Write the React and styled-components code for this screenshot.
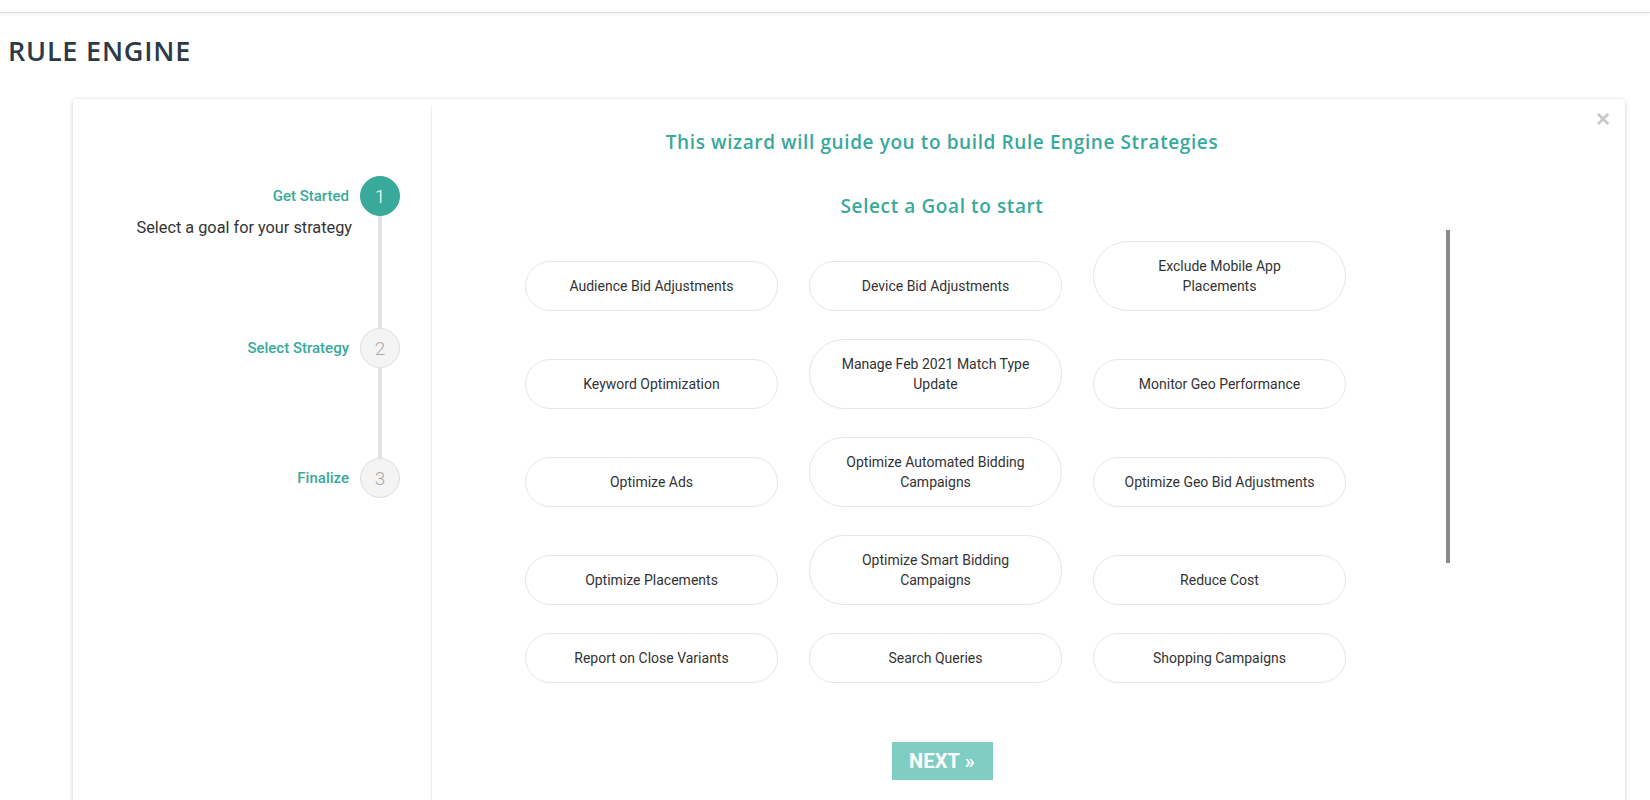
import React from "react";
import styled, { createGlobalStyle } from "styled-components";

const TEAL = "#38a99b";

const GlobalStyle = createGlobalStyle`
  html, body {
    margin: 0;
    padding: 0;
    background: #ffffff;
    overflow: hidden;
    font-family: Roboto, "Liberation Sans", Arial, sans-serif;
  }
  * { box-sizing: border-box; }
`;

const Page = styled.div`
  width: 1650px;
  height: 800px;
  overflow: hidden;
  background: #fff;
`;

const TopBar = styled.div`
  height: 13px;
  background: #fff;
  border-bottom: 1px solid #dfe3e8;
  box-shadow: 0 1px 3px rgba(0, 0, 0, 0.08);
`;

const PageTitle = styled.h1`
  margin: 20px 0 0 0;
  padding-left: 8px;
  height: 36px;
  line-height: 36px;
  font-family: "Open Sans", "Noto Sans", sans-serif;
  font-weight: 600;
  font-size: 27px;
  color: #2c3a47;
  letter-spacing: 0.8px;
`;

const Card = styled.div`
  position: relative;
  margin: 30px 0 0 73px;
  width: 1552px;
  height: 740px;
  background: #fff;
  border-radius: 4px;
  box-shadow: 0 1px 4px rgba(0, 0, 0, 0.22);
  display: flex;
`;

const CloseButton = styled.span`
  position: absolute;
  top: 8px;
  right: 15px;
  font-size: 24px;
  line-height: 24px;
  font-weight: 700;
  color: #c8c8c8;
  font-family: "Liberation Sans", Arial, sans-serif;
`;

const StepsColumn = styled.div`
  width: 359px;
  margin-top: 7px;
  padding-top: 70px;
  border-right: 1px solid #eeeeee;
  display: flex;
  flex-direction: column;
`;

const Step = styled.div`
  display: flex;
  padding-right: 31px;
`;

const StepText = styled.div`
  flex: 1;
  text-align: right;
  padding-bottom: ${(p) => (p.$last ? "0" : "90px")};
`;

const StepLabel = styled.div`
  height: 40px;
  line-height: 40px;
  padding-right: 11px;
  font-size: 15px;
  font-weight: 500;
  color: ${TEAL};
`;

const StepDesc = styled.div`
  line-height: 20px;
  margin-top: 2px;
  padding-right: 8px;
  font-size: 16.3px;
  color: #333;
`;

const Indicator = styled.div`
  width: 40px;
  display: flex;
  flex-direction: column;
  align-items: center;
`;

const Circle = styled.div`
  width: 40px;
  height: 40px;
  flex: none;
  border-radius: 50%;
  display: flex;
  align-items: center;
  justify-content: center;
  font-size: 19px;
  font-weight: 300;
  background: ${(p) => (p.$active ? TEAL : "#f4f4f4")};
  border: 1px solid ${(p) => (p.$active ? TEAL : "#dedede")};
  color: ${(p) => (p.$active ? "#fff" : "#a8a8a8")};
`;

const Connector = styled.div`
  flex: 1;
  width: 4px;
  background: #e2e2e2;
`;

const MainPanel = styled.div`
  width: 1020px;
  padding-top: 31px;
  display: flex;
  flex-direction: column;
`;

const WizardTitle = styled.h2`
  margin: 0;
  text-align: center;
  line-height: 24px;
  font-family: "Open Sans", "Noto Sans", sans-serif;
  font-weight: 600;
  font-size: 19px;
  letter-spacing: 0.6px;
  color: ${TEAL};
`;

const WizardSubtitle = styled(WizardTitle)`
  margin-top: 40px;
`;

const ScrollRow = styled.div`
  margin-top: 12px;
  display: flex;
  align-items: flex-start;
`;

const GoalGrid = styled.div`
  margin: 11px 0 0 93px;
  display: grid;
  grid-template-columns: repeat(3, 253px);
  column-gap: 31px;
  row-gap: 28px;
  align-items: end;
`;

const GoalButton = styled.button`
  width: 253px;
  padding: 14px 29px;
  border: 1px solid #e6e6e6;
  border-radius: 40px;
  background: #fff;
  font-family: Roboto, "Liberation Sans", sans-serif;
  font-size: 14px;
  line-height: 20px;
  color: #333;
  text-align: center;
  cursor: pointer;
`;

const ScrollThumb = styled.div`
  margin-left: auto;
  margin-right: 2px;
  width: 4px;
  height: 333px;
  background: #8a8a8a;
`;

const Footer = styled.div`
  margin-top: 59px;
  display: flex;
  justify-content: center;
`;

const NextButton = styled.button`
  width: 101px;
  height: 38px;
  border: none;
  background: #80cdc4;
  color: #fff;
  font-family: Roboto, "Liberation Sans", sans-serif;
  font-weight: 700;
  font-size: 20px;
  letter-spacing: 0.2px;
  cursor: pointer;
`;

const steps = [
  { label: "Get Started", desc: "Select a goal for your strategy" },
  { label: "Select Strategy" },
  { label: "Finalize" },
];

const goals = [
  "Audience Bid Adjustments",
  "Device Bid Adjustments",
  "Exclude Mobile App Placements",
  "Keyword Optimization",
  "Manage Feb 2021 Match Type Update",
  "Monitor Geo Performance",
  "Optimize Ads",
  "Optimize Automated Bidding Campaigns",
  "Optimize Geo Bid Adjustments",
  "Optimize Placements",
  "Optimize Smart Bidding Campaigns",
  "Reduce Cost",
  "Report on Close Variants",
  "Search Queries",
  "Shopping Campaigns",
];

export default function App() {
  return (
    <Page>
      <GlobalStyle />
      <TopBar />
      <PageTitle>RULE ENGINE</PageTitle>
      <Card>
        <CloseButton>×</CloseButton>
        <StepsColumn>
          {steps.map((s, i) => {
            const last = i === steps.length - 1;
            return (
              <Step key={s.label}>
                <StepText $last={last}>
                  <StepLabel>{s.label}</StepLabel>
                  {s.desc && <StepDesc>{s.desc}</StepDesc>}
                </StepText>
                <Indicator>
                  <Circle $active={i === 0}>{i + 1}</Circle>
                  {!last && <Connector />}
                </Indicator>
              </Step>
            );
          })}
        </StepsColumn>
        <MainPanel>
          <WizardTitle>This wizard will guide you to build Rule Engine Strategies</WizardTitle>
          <WizardSubtitle>Select a Goal to start</WizardSubtitle>
          <ScrollRow>
            <GoalGrid>
              {goals.map((g) => (
                <GoalButton key={g}>{g}</GoalButton>
              ))}
            </GoalGrid>
            <ScrollThumb />
          </ScrollRow>
          <Footer>
            <NextButton>NEXT »</NextButton>
          </Footer>
        </MainPanel>
      </Card>
    </Page>
  );
}
